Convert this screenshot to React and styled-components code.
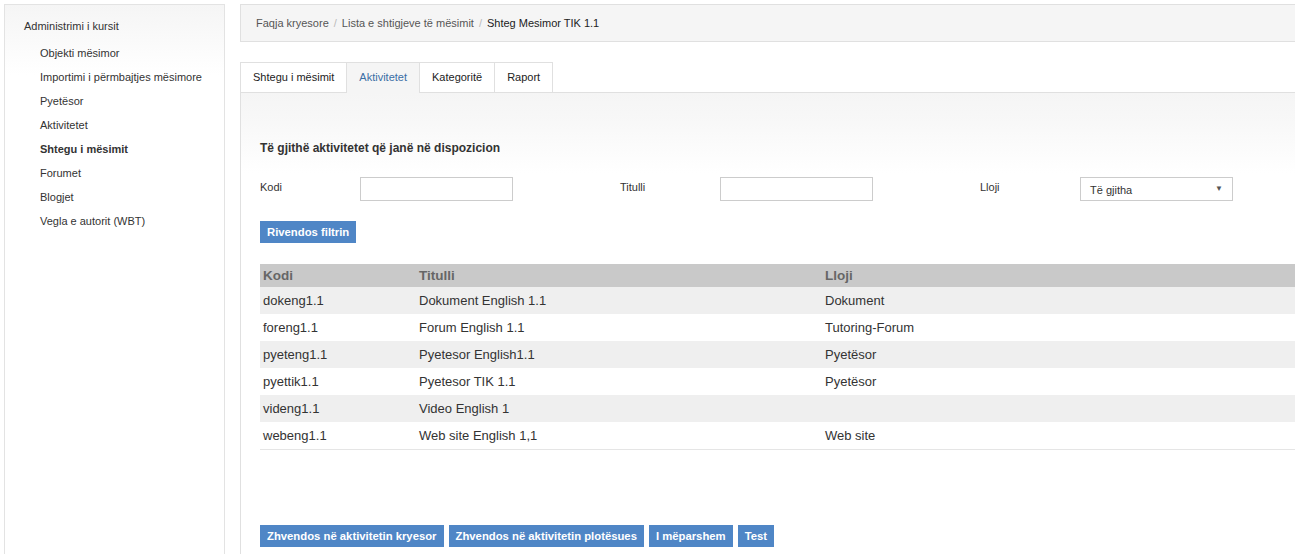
import React from "react";
import styled, { createGlobalStyle } from "styled-components";

const GlobalStyle = createGlobalStyle`
  html, body {
    margin: 0;
    padding: 0;
    background: #fff;
    font-family: "Liberation Sans", Arial, sans-serif;
    color: #333;
  }
  * { box-sizing: border-box; }
`;

const menuItems = [
  { label: "Objekti mësimor" },
  { label: "Importimi i përmbajtjes mësimore" },
  { label: "Pyetësor" },
  { label: "Aktivitetet" },
  { label: "Shtegu i mësimit", active: true },
  { label: "Forumet" },
  { label: "Blogjet" },
  { label: "Vegla e autorit (WBT)" }
];

const tabs = ["Shtegu i mësimit", "Aktivitetet", "Kategoritë", "Raport"];

const rows = [
  ["dokeng1.1", "Dokument English 1.1", "Dokument"],
  ["foreng1.1", "Forum English 1.1", "Tutoring-Forum"],
  ["pyeteng1.1", "Pyetesor English1.1", "Pyetësor"],
  ["pyettik1.1", "Pyetesor TIK 1.1", "Pyetësor"],
  ["videng1.1", "Video English 1", ""],
  ["webeng1.1", "Web site English 1,1", "Web site"]
];

const App = () => {
  return (
    <Page>
      <GlobalStyle />
      <Sidebar>
        <SideTitle>Administrimi i kursit</SideTitle>
        <SideList>
          {menuItems.map((item) => (
            <SideItem key={item.label} $active={item.active}>
              {item.label}
            </SideItem>
          ))}
        </SideList>
      </Sidebar>
      <Main>
        <Breadcrumb>
          <Crumb>Faqja kryesore</Crumb>
          <Sep>/</Sep>
          <Crumb>Lista e shtigjeve të mësimit</Crumb>
          <Sep>/</Sep>
          <Crumb $current>Shteg Mesimor TIK 1.1</Crumb>
        </Breadcrumb>
        <TabBar>
          {tabs.map((t, i) => (
            <Tab key={t} $active={i === 1}>
              {t}
            </Tab>
          ))}
        </TabBar>
        <Panel>
          <Heading>Të gjithë aktivitetet që janë në dispozicion</Heading>
          <FilterRow>
            <FilterGroup>
              <FilterLabel>Kodi</FilterLabel>
              <TextInput />
            </FilterGroup>
            <FilterGroup>
              <FilterLabel>Titulli</FilterLabel>
              <TextInput />
            </FilterGroup>
            <FilterGroup>
              <FilterLabel>Lloji</FilterLabel>
              <SelectBox>
                <span>Të gjitha</span>
                <Caret>▼</Caret>
              </SelectBox>
            </FilterGroup>
          </FilterRow>
          <ButtonRow $top="20px">
            <Button>Rivendos filtrin</Button>
          </ButtonRow>
          <Table>
            <thead>
              <tr>
                <Th $w="156px">Kodi</Th>
                <Th $w="406px">Titulli</Th>
                <Th>Lloji</Th>
              </tr>
            </thead>
            <tbody>
              {rows.map((r, i) => (
                <Tr key={r[0]} $odd={i % 2 === 0}>
                  <Td>{r[0]}</Td>
                  <Td>{r[1]}</Td>
                  <Td>{r[2]}</Td>
                </Tr>
              ))}
            </tbody>
          </Table>
          <ButtonRow $top="75px">
            <Button>Zhvendos në aktivitetin kryesor</Button>
            <Button>Zhvendos në aktivitetin plotësues</Button>
            <Button>I mëparshem</Button>
            <Button>Test</Button>
          </ButtonRow>
        </Panel>
      </Main>
    </Page>
  );
};

const Page = styled.div`
  display: flex;
  align-items: stretch;
  min-height: 554px;
  padding: 4px 0 0 4px;
`;

const Sidebar = styled.aside`
  width: 221px;
  flex-shrink: 0;
  border: 1px solid #e3e3e3;
  border-bottom: none;
  background: linear-gradient(#f5f5f5 0px, #fff 70px);
  padding: 14px 0 0 19px;
`;

const SideTitle = styled.div`
  font-size: 11px;
  color: #333;
  line-height: 14px;
  margin-bottom: 13px;
`;

const SideList = styled.ul`
  list-style: none;
  margin: 0;
  padding: 0 0 0 16px;
`;

const SideItem = styled.li`
  font-size: 11px;
  line-height: 14px;
  height: 24px;
  color: #333;
  font-weight: ${(p) => (p.$active ? "bold" : "normal")};
`;

const Main = styled.div`
  flex: 1;
  margin-left: 15px;
  display: flex;
  flex-direction: column;
  min-width: 0;
`;

const Breadcrumb = styled.div`
  height: 38px;
  background: #f5f5f5;
  border: 1px solid #e0e0e0;
  border-right: none;
  display: flex;
  align-items: center;
  padding-left: 15px;
  font-size: 11px;
`;

const Crumb = styled.span`
  color: ${(p) => (p.$current ? "#222" : "#555")};
`;

const Sep = styled.span`
  color: #bbb;
  padding: 0 5px;
`;

const TabBar = styled.div`
  display: flex;
  margin-top: 20px;
  height: 30px;
`;

const Tab = styled.div`
  font-size: 11px;
  line-height: 28px;
  padding: 0 12px;
  border: 1px solid #e0e0e0;
  border-bottom: none;
  margin-right: -1px;
  background: ${(p) => (p.$active ? "#f5f5f5" : "#fff")};
  color: ${(p) => (p.$active ? "#3a6ea5" : "#222")};
  position: relative;
  z-index: ${(p) => (p.$active ? 1 : 0)};
  height: ${(p) => (p.$active ? "31px" : "30px")};
`;

const Panel = styled.div`
  flex: 1;
  border-top: 1px solid #e0e0e0;
  border-left: 1px solid #e0e0e0;
  background: linear-gradient(#f5f5f5 0px, #f8f8f8 30px, #fff 80px);
  padding: 48px 0 0 19px;
`;

const Heading = styled.div`
  font-size: 12px;
  font-weight: bold;
  color: #333;
  line-height: 14px;
`;

const FilterRow = styled.div`
  display: grid;
  grid-template-columns: repeat(3, 360px);
  margin-top: 22px;
`;

const FilterGroup = styled.div`
  display: flex;
  align-items: center;
`;

const FilterLabel = styled.span`
  width: 100px;
  font-size: 11px;
  color: #333;
  padding-bottom: 4px;
`;

const TextInput = styled.input`
  width: 153px;
  height: 24px;
  border: 1px solid #ccc;
  background: #fff;
  padding: 0 6px;
  font-size: 11px;
  margin: 0;
`;

const SelectBox = styled.div`
  width: 153px;
  height: 24px;
  border: 1px solid #ccc;
  background: #fff;
  display: flex;
  align-items: center;
  justify-content: space-between;
  padding: 2px 9px 0 9px;
  font-size: 11px;
  color: #333;
`;

const Caret = styled.span`
  font-size: 8px;
  color: #555;
  margin-top: -4px;
`;

const ButtonRow = styled.div`
  display: flex;
  gap: 5px;
  margin-top: ${(p) => p.$top};
`;

const Button = styled.button`
  font-family: "Liberation Sans", Arial, sans-serif;
  font-size: 11.3px;
  font-weight: bold;
  color: #fff;
  background: #4f86c6;
  border: none;
  height: 22px;
  padding: 0 7px;
  margin: 0;
  cursor: pointer;
`;

const Table = styled.table`
  width: 100%;
  border-collapse: collapse;
  margin-top: 21px;
  font-size: 13px;
  border-bottom: 1px solid #e5e5e5;
`;

const Th = styled.th`
  text-align: left;
  background: #c9c9c9;
  color: #666;
  font-weight: bold;
  font-size: 13.5px;
  height: 23px;
  padding: 0 3px;
  width: ${(p) => p.$w || "auto"};
`;

const Tr = styled.tr`
  background: ${(p) => (p.$odd ? "#efefef" : "#fff")};
`;

const Td = styled.td`
  height: 27px;
  padding: 0 3px;
  color: #333;
`;

export default App;
